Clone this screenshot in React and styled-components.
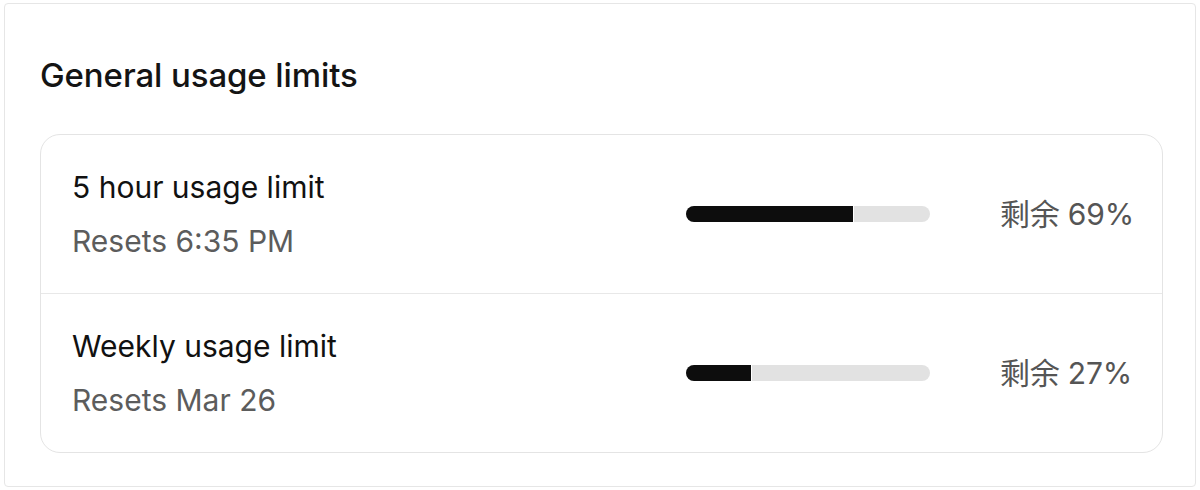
import styled, { createGlobalStyle } from 'styled-components';

const limits = [
    { id: 'five-hour', title: '5 hour usage limit', reset: 'Resets 6:35 PM', remaining: 69 },
    { id: 'weekly', title: 'Weekly usage limit', reset: 'Resets Mar 26', remaining: 27 },
];

export default function App() {
    return (
        <>
            <GlobalStyle />
            <Page>
                <Panel>
                    <Heading>General usage limits</Heading>
                    <LimitList>
                        {limits.map((limit) => <LimitRow key={limit.id} {...limit} />)}
                    </LimitList>
                </Panel>
            </Page>
        </>
    );
}

function LimitRow({ title, reset, remaining }) {
    return (
        <Row>
            <Info>
                <Title>{title}</Title>
                <Reset>{reset}</Reset>
            </Info>
            <Track>
                <Fill style={{ width: `${remaining}%` }} />
            </Track>
            <Remaining>剩余 {remaining}%</Remaining>
        </Row>
    );
}

const GlobalStyle = createGlobalStyle`
    html, body {
        margin: 0;
        background: #ffffff;
    }
    body {
        font-family: Inter, "Noto Sans CJK SC", sans-serif;
        -webkit-font-smoothing: antialiased;
    }
`;

const Page = styled.div`
    width: 1200px;
    height: 490px;
    padding: 3px 4px 0 4px;
    box-sizing: border-box;
`;

const Panel = styled.section`
    box-sizing: border-box;
    height: 484px;
    padding: 51px 32px 0 35px;
    border: 1px solid #e6e6e6;
    border-radius: 4px;
    background: #ffffff;
`;

const Heading = styled.h2`
    margin: 0 0 39px 0;
    font-size: 33px;
    line-height: 40px;
    font-weight: 500;
    color: #141414;
    letter-spacing: -0.1px;
`;

const LimitList = styled.div`
    border: 1px solid #e4e4e4;
    border-radius: 20px;
    overflow: hidden;
`;

const Row = styled.div`
    display: flex;
    align-items: center;
    padding: 32px 31px 32px 31px;

    & + & {
        border-top: 1px solid #e8e8e8;
    }
`;

const Info = styled.div`
    flex: 1;
    display: flex;
    flex-direction: column;
    gap: 14px;
`;

const Title = styled.div`
    font-size: 30px;
    line-height: 40px;
    color: #111111;
`;

const Reset = styled.div`
    font-size: 30px;
    line-height: 40px;
    color: #5c5c5c;
`;

const Track = styled.div`
    width: 244px;
    height: 16px;
    border-radius: 8px;
    background: #e2e2e2;
    overflow: hidden;
    display: flex;
`;

const Fill = styled.div`
    height: 100%;
    background: #0d0d0d;
    border-right: 1px solid #ffffff;
    box-sizing: border-box;
`;

const Remaining = styled.div`
    width: 131px;
    margin-left: 70px;
    text-align: right;
    font-size: 30px;
    line-height: 40px;
    color: #555555;
    white-space: nowrap;
    letter-spacing: -0.2px;
`;
